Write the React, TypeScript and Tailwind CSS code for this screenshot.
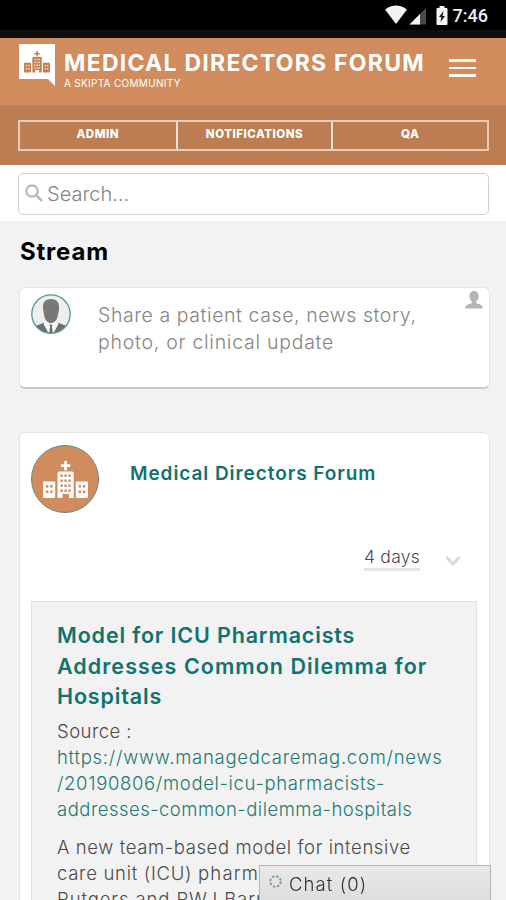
import React from 'react';

const navItems = ['ADMIN', 'NOTIFICATIONS', 'QA'];

function Hospital({ className, hole }: { className?: string; hole: string }) {
  return (
    <svg viewBox="0 0 45 38" className={className} fill="currentColor">
      <path d="M21.200 0h2.800v3.300h3.300v2.700H24v3.300h-2.800V6h-3.300V3.300h3.300z" />
      <path d="M14.500 12q0-1.500 1.500-1.500h13.200q1.500 0 1.500 1.500v25H26v-4h-6.500v4h-5z" />
      <rect x="0" y="20.500" width="12.200" height="16.500" rx="1" />
      <rect x="32.800" y="20.500" width="12.200" height="16.500" rx="1" />
      <g fill={hole}>
        {[13.5, 18.5, 23.5, 28.5].map((y) =>
          [17.5, 21.4, 25.3].map((x) => <rect key={`${x}-${y}`} x={x} y={y} width="2.4" height="2.4" />)
        )}
        {[24, 29.5].map((y) =>
          [3, 7.2, 35.6, 39.8].map((x) => <rect key={`${x}-${y}`} x={x} y={y} width="2.4" height="2.6" />)
        )}
      </g>
    </svg>
  );
}

function StatusBar() {
  return (
    <div className="flex h-[38px] shrink-0 items-start justify-end border-b-8 border-[#0e0e0e] bg-black pr-[18px]">
      <svg viewBox="0 0 64 24" className="mt-[4px] h-6 w-16" fill="#f3f3f3">
        <path d="M0 5.500Q11 -2.500 22 5.500L11 20z" />
        <path d="M24.500 20.500L41 4v16.500z" fill="#4a4a4a" />
        <path d="M24.500 20.500L35 10v10.500z" />
        <path d="M54.500 2h5v2h2q1 0 1 1v15q0 1-1 1h-9q-1 0-1-1V5q0-1 1-1h2z" />
        <path d="M58.500 7l-4.500 6h2.400l-.9 5 4.500-6h-2.500z" fill="#111" />
      </svg>
      <span className="ml-[4px] mt-[3px] font-[Roboto] text-[18px] font-medium leading-[26px] text-[#eee]">7:46</span>
    </div>
  );
}

function Header() {
  return (
    <header className="shrink-0">
      <div className="flex h-[67px] items-start bg-[#d08c5c] pl-[19px] pr-[30px] text-white">
        <div className="relative mt-[6px] h-[43px] w-9 shrink-0">
          <svg viewBox="0 0 36 43" className="h-[43px] w-9" fill="#fff">
            <path d="M0 0h36v42l-7-7H0z" />
          </svg>
          <Hospital className="absolute left-[5px] top-[7px] h-[22px] w-[26px] text-[#c77e4f]" hole="#f6e4d8" />
        </div>
        <div className="ml-[9px] mt-[10px] grow whitespace-nowrap">
          <h1 className="text-[23px] font-bold leading-[30px] tracking-[1.25px]">MEDICAL DIRECTORS FORUM</h1>
          <p className="text-[10px] leading-[11px] tracking-[0.3px]">A SKIPTA COMMUNITY</p>
        </div>
        <div className="mt-[21px] flex w-[27px] shrink-0 flex-col gap-[5px]">
          <span className="h-[2.500px] bg-[#fff6ee]" />
          <span className="h-[2.500px] bg-[#fff6ee]" />
          <span className="h-[2.500px] bg-[#fff6ee]" />
        </div>
      </div>
      <nav className="h-[60px] bg-[#bc7d53] pl-[18px] pr-[17px] pt-[15px]">
        <div className="grid h-[31px] grid-cols-3 border-2 border-[#e6cbb9] text-[11.500px] font-extrabold leading-[25px] tracking-[0.5px] text-white">
          {navItems.map((item, i) => (
            <span key={item} className={i > 0 ? 'border-l-2 border-[#f0dfd4] text-center' : 'text-center'}>
              {item}
            </span>
          ))}
        </div>
      </nav>
    </header>
  );
}

function ShareBox() {
  return (
    <section className="mt-[19px] flex h-[102px] items-start rounded-[6px] border border-b-2 border-[#e6e6e6] border-b-[#cacaca] bg-white pl-[11px] pr-[6px]">
      <svg viewBox="0 0 40 40" className="mt-[6px] h-10 w-10 shrink-0">
        <circle cx="20" cy="20" r="19" fill="#eee" />
        <path d="M4.500 32Q10 30 14.500 28h11q5 2 10 4Q30 39.500 20 39.500T4.500 32z" fill="#6e6e6e" />
        <path d="M14.500 26h11l2 4-5 9h-5l-5-9z" fill="#f8f8f8" />
        <path d="M18.500 30.500h3l-.6 2.500 1 6.500h-3.800l1-6.500z" fill="#6e6e6e" />
        <path d="M20 5c5.800 0 8.200 3.500 8 8.500-.1 3-.7 6.500-1.600 9.500-.8 3.500-3.200 6-6.400 6s-5.600-2.500-6.400-6c-.9-3-1.500-6.500-1.600-9.500C11.800 8.500 14.200 5 20 5z" fill="#787878" />
        <circle cx="20" cy="20" r="19.200" fill="none" stroke="#4f9693" strokeWidth="1.300" />
      </svg>
      <p className="ml-[27px] mt-[14px] grow whitespace-nowrap text-[19.500px] font-light leading-[27px] tracking-[0.58px] text-[#858585]">
        Share a patient case, news story,
        <br />
        <span className="tracking-[0.74px]">photo, or clinical update</span>
      </p>
      <svg viewBox="0 0 18 18" className="mt-[3px] h-[18px] w-[18px] shrink-0" fill="#b2b7b9">
        <path d="M9 0c3 0 4.700 2 4.600 5-.1 2.300-1 4.500-2.300 5.600v1.700c3.500 1.200 6.400 1.700 6.700 5.200H0c.3-3.500 3.200-4 6.700-5.200v-1.700C5.400 9.500 4.500 7.300 4.400 5 4.300 2 6 0 9 0z" />
      </svg>
    </section>
  );
}

function Post() {
  return (
    <article className="mt-[43px] h-[600px] rounded-[6px] border border-[#e4e4e4] bg-white pl-[11px] pr-[12px]">
      <div className="flex items-start pt-[12px]">
        <div className="flex h-[68px] w-[68px] items-center justify-center rounded-full border border-[#5e8f83] bg-[#d08c5c]">
          <Hospital className="mt-px h-[38px] w-[45px] text-white" hole="#d08c5c" />
        </div>
        <h3 className="ml-[31px] mt-[15px] whitespace-nowrap text-[19px] font-semibold leading-[28px] tracking-[0.93px] text-[#11726f]">
          Medical Directors Forum
        </h3>
      </div>
      <div className="mt-[32px] flex h-[56px] justify-end pr-[16px]">
        <span className="h-[26px] whitespace-nowrap border-b-[3px] border-[#e6e6e6] text-[17.500px] font-light leading-[24px] tracking-[0.25px] text-[#4a4a4a]">
          4 days
        </span>
        <svg viewBox="0 0 16 12" className="ml-[25px] mt-[10px] h-3 w-4" fill="none" stroke="#dadada" strokeWidth="3.200">
          <path d="M1.500 2L8 9l6.500-7" />
        </svg>
      </div>
      <div className="h-[400px] whitespace-nowrap border border-[#e0e0e0] bg-[#f2f2f2] pl-[25px] pt-[18px]">
        <h2 className="text-[21.500px] font-semibold leading-[30.500px] tracking-[1.04px] text-[#11726f]">
          <span className="tracking-[0.85px]">Model for ICU Pharmacists</span>
          <br />
          Addresses Common Dilemma for
          <br />
          <span className="tracking-[0.85px]">Hospitals</span>
        </h2>
        <div className="mt-[6px] text-[18.500px] font-light leading-[26px] tracking-[0.6px] text-[#4a4a4a]">
          <p className="tracking-[0.45px]">Source :</p>
          <p className="text-[#1f7a75]">
            <span className="tracking-[0.73px]">https://www.managedcaremag.com/news</span>
            <br />
            <span className="tracking-[0.66px]">/20190806/model-icu-pharmacists-</span>
            <br />
            <span className="tracking-[0.48px]">addresses-common-dilemma-hospitals</span>
          </p>
          <p className="mt-[12px]">
            A new team-based model for intensive
            <br />
            <span className="tracking-[0.7px]">care unit (ICU) </span>
            <span className="tracking-[1.200px]">pharmacists at</span>
            <br />
            <span className="tracking-[0.9px]">Rutgers and RWJ Barnabas</span>
          </p>
        </div>
      </div>
    </article>
  );
}

function ChatBar() {
  return (
    <div className="fixed bottom-0 left-[259px] flex h-[35px] w-[232px] items-center border border-b-0 border-[#b4b4b4] bg-gradient-to-b from-[#e9e9e9] to-[#dedede] pl-[8px]">
      <svg viewBox="0 0 16 16" className="-mt-[3px] h-[15px] w-[15px]" fill="none" stroke="#7f9cab" strokeWidth="2.200">
        <circle cx="8" cy="8" r="5.600" strokeDasharray="2.600 1.800" />
      </svg>
      <span className="ml-[6px] mt-[2px] text-[18.500px] font-light leading-[34px] tracking-[1.1px] text-[#333]">Chat (0)</span>
    </div>
  );
}

export default function App() {
  return (
    <div className="flex h-[900px] w-[506px] flex-col overflow-hidden bg-[#f2f2f2] font-[Inter,sans-serif]">
      <StatusBar />
      <Header />
      <div className="h-[56px] shrink-0 bg-white pl-[18px] pr-[17px] pt-[8px]">
        <div className="flex h-[42px] items-center rounded-[5px] border border-[#cfcfcf] pl-[6px]">
          <svg viewBox="0 0 18 18" className="-mt-[2px] h-[18px] w-[18px]" fill="none" stroke="#b9b9b9" strokeWidth="2.200">
            <circle cx="7" cy="7" r="5.700" />
            <path d="M11.200 11.200L17 17" strokeWidth="2.600" />
          </svg>
          <span className="ml-[4px] text-[20px] font-light text-[#858585]">Search...</span>
        </div>
      </div>
      <main className="grow px-[16px] pl-[19px]">
        <h2 className="ml-px mt-[15px] text-[24px] font-bold leading-[32px] tracking-[0.8px] text-black">Stream</h2>
        <ShareBox />
        <Post />
      </main>
      <ChatBar />
    </div>
  );
}
